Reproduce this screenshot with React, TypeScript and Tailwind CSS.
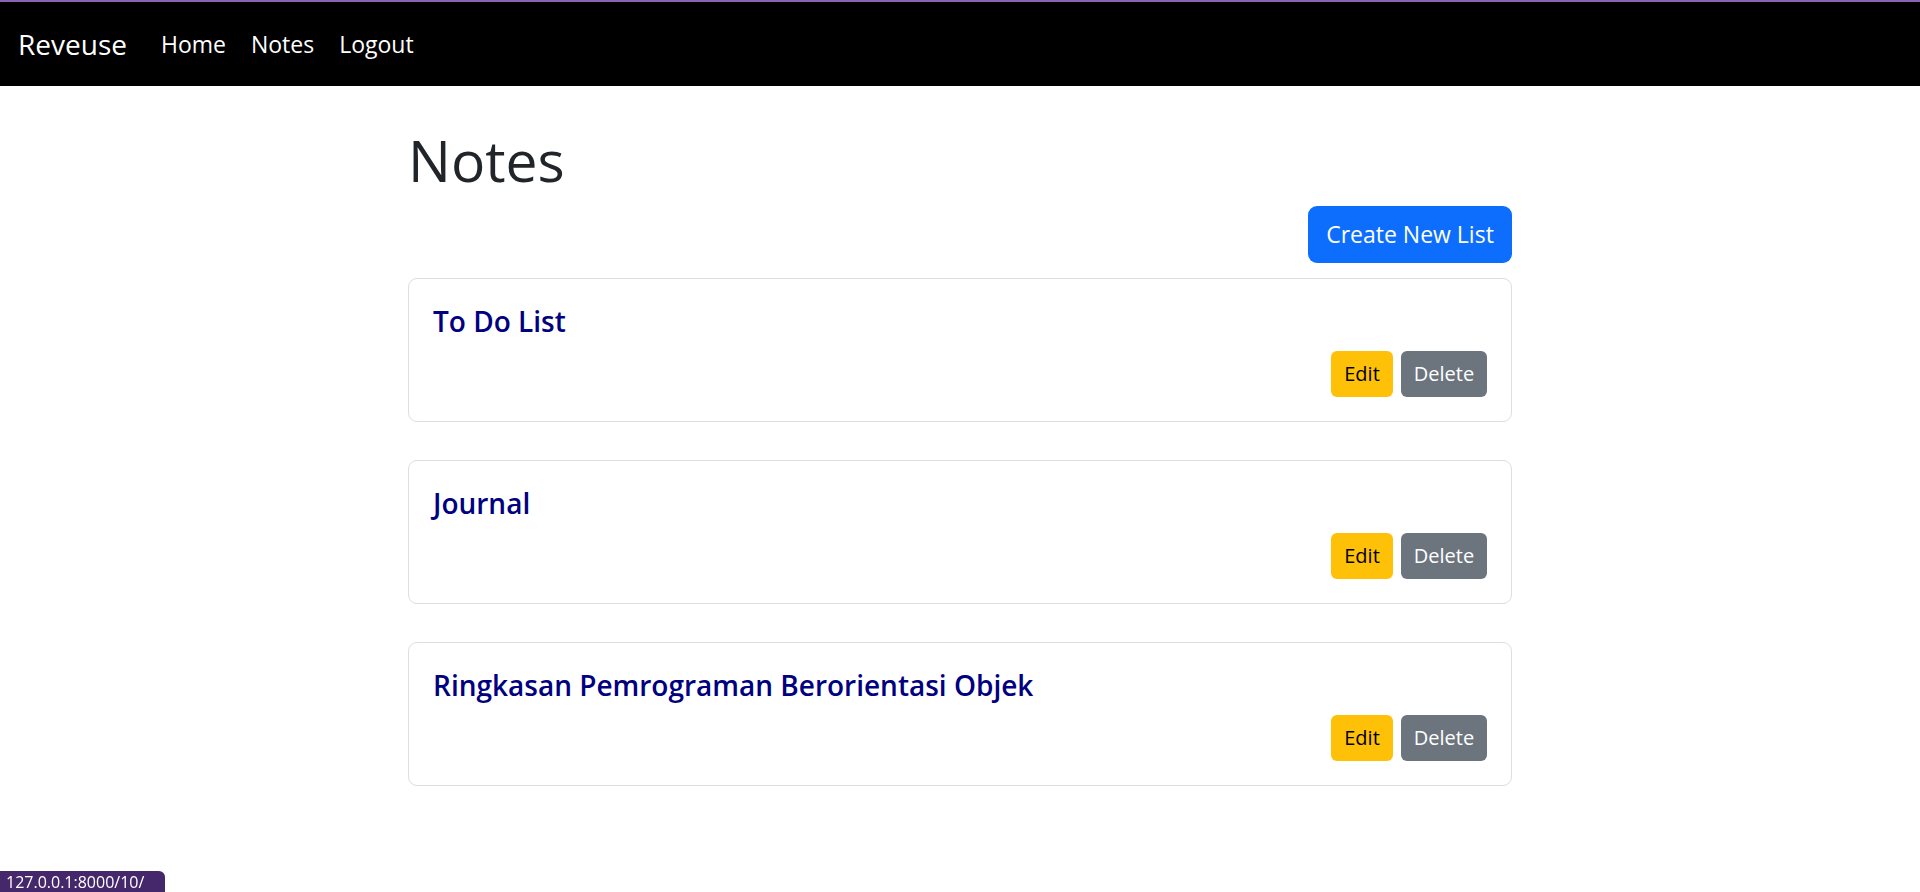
import React from "react";

type NoteList = {
  id: number;
  title: string;
};

const lists: NoteList[] = [
  { id: 1, title: "To Do List" },
  { id: 2, title: "Journal" },
  { id: 3, title: "Ringkasan Pemrograman Berorientasi Objek" },
];

const font = { fontFamily: '"Open Sans", "Noto Sans", sans-serif' };

function Navbar() {
  return (
    <nav className="border-t-2 border-[#8c62b3] bg-black">
      <div className="flex h-[84px] items-center px-[18px]">
        <a className="mr-[34px] text-[28px] leading-none text-white">Reveuse</a>
        <div className="flex items-center gap-[25px] text-[23px] leading-none text-white">
          <a>Home</a>
          <a>Notes</a>
          <a>Logout</a>
        </div>
      </div>
    </nav>
  );
}

function ListCard({ list }: { list: NoteList }) {
  return (
    <div className="rounded-[9px] border border-[#dedede] bg-white p-[24px]">
      <h5 className="mb-[12px] text-[28px] leading-[36px] font-semibold text-[#000080]">
        {list.title}
      </h5>
      <div className="flex justify-end gap-[8px]">
        <button
          type="button"
          className="h-[46px] w-[62px] rounded-[6px] bg-[#ffc107] text-[20px] text-black"
        >
          Edit
        </button>
        <button
          type="button"
          className="h-[46px] w-[86px] rounded-[6px] bg-[#6c757d] text-[20px] text-white"
        >
          Delete
        </button>
      </div>
    </div>
  );
}

export default function App() {
  return (
    <div className="relative min-h-[892px] bg-white" style={font}>
      <Navbar />

      <main className="mx-auto w-[1104px] pt-[38px]">
        <h1 className="mb-[10px] text-[57px] leading-[72px] font-medium text-[#212529]">
          Notes
        </h1>

        <div className="mb-[15px] flex justify-end">
          <button
            type="button"
            className="h-[57px] w-[204px] rounded-[9px] bg-[#0d6efd] text-[23px] text-white"
          >
            Create New List
          </button>
        </div>

        <div className="flex flex-col gap-[38px]">
          {lists.map((list) => (
            <ListCard key={list.id} list={list} />
          ))}
        </div>
      </main>

      <div className="fixed bottom-0 left-0 flex h-[21px] w-[165px] items-center rounded-tr-[6px] bg-[#45286b] pl-[6px] text-[16px] leading-none text-white">
        127.0.0.1:8000/10/
      </div>
    </div>
  );
}
